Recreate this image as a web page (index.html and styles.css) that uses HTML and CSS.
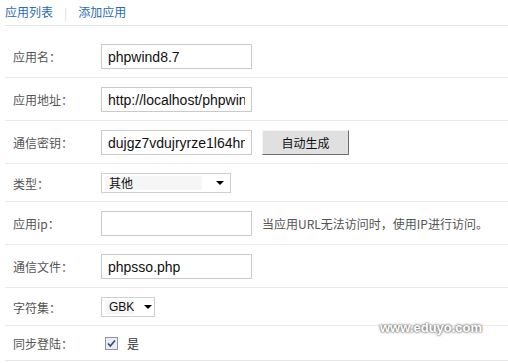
FILE: index.html
```html
<!DOCTYPE html>
<html lang="zh-CN">
<head>
  <meta charset="UTF-8" />
  <title>添加应用</title>
  <link rel="stylesheet" href="styles.css">
</head>
<body>
  <div class="wrap">
    <div class="tabs">
      <a class="tab" href="#">应用列表</a>
      <span class="tab-sep">|</span>
      <a class="tab" href="#">添加应用</a>
    </div>

    <form class="app-form">
      <div class="row">
        <label class="row-label">应用名：</label>
        <div class="row-field"><input class="text" type="text" value="phpwind8.7"></div>
      </div>
      <div class="row">
        <label class="row-label">应用地址：</label>
        <div class="row-field"><input class="text" type="text" value="http://localhost/phpwind"></div>
      </div>
      <div class="row">
        <label class="row-label">通信密钥：</label>
        <div class="row-field">
          <input class="text" type="text" value="dujgz7vdujryrze1l64hmq">
          <button class="btn" type="button">自动生成</button>
        </div>
      </div>
      <div class="row row-select">
        <label class="row-label">类型：</label>
        <div class="row-field">
          <div class="select select-type"><span class="select-value">其他</span><span class="select-arrow"></span></div>
        </div>
      </div>
      <div class="row">
        <label class="row-label">应用ip：</label>
        <div class="row-field">
          <input class="text" type="text" value="">
          <span class="hint">当应用URL无法访问时，使用IP进行访问。</span>
        </div>
      </div>
      <div class="row">
        <label class="row-label">通信文件：</label>
        <div class="row-field"><input class="text" type="text" value="phpsso.php"></div>
      </div>
      <div class="row row-select">
        <label class="row-label">字符集：</label>
        <div class="row-field">
          <div class="select select-charset"><span class="select-value">GBK</span><span class="select-arrow"></span></div>
        </div>
      </div>
      <div class="row row-check">
        <label class="row-label">同步登陆：</label>
        <div class="row-field">
          <span class="check"><svg width="13" height="13" viewBox="0 0 13 13"><rect x="0.5" y="0.5" width="12" height="12" fill="#e9ecf0" stroke="#8d97a3"/><path d="M3 6.5 L5.3 9 L10 3.5" fill="none" stroke="#2b4a8a" stroke-width="1.6"/></svg></span>
          <span class="check-text">是</span>
        </div>
      </div>
    </form>
  </div>
  <div class="watermark">www.eduyo.com</div>
</body>
</html>
```

FILE: styles.css
```css
* {
  box-sizing: border-box;
  margin: 0;
  padding: 0;
}

body {
  font-family: "Noto Sans CJK SC", "Liberation Sans", sans-serif;
  font-size: 12px;
  color: #444;
  background: #fff;
  position: relative;
  height: 363px;
  overflow: hidden;
}

.wrap {
  padding-left: 5px;
}

.tabs {
  height: 26px;
  border-bottom: 1px solid #e6e6e6;
  display: flex;
  align-items: center;
  padding-bottom: 1px;
}

.tab {
  color: #2a6cb0;
  text-decoration: none;
  line-height: 14px;
}

.tab-sep {
  color: #ddd;
  margin: 0 11px 0 11px;
}

.app-form {
  margin-top: 9px;
  border-bottom: 1px solid #dde7ec;
}

.row {
  display: flex;
  align-items: center;
  padding: 9px 0 8px;
  border-bottom: 1px solid #ebebeb;
}

.row:last-child {
  border-bottom: none;
}

.row-label {
  width: 96px;
  padding-left: 8px;
  color: #555;
}

.row-field {
  display: flex;
  align-items: center;
  height: 25px;
}

.row-select .row-field {
  height: 20px;
}

.row-check .row-field {
  height: 16px;
}

.text {
  width: 151px;
  height: 25px;
  border: 1px solid #cacaca;
  padding: 0 6px;
  font-family: "Liberation Sans", sans-serif;
  font-size: 14px;
  color: #111;
  background: #fff;
  outline: none;
}

.btn {
  margin-left: 10px;
  width: 87px;
  height: 25px;
  background: #e0e0e0;
  border: 1px solid;
  border-color: #f4f4f4 #6e6e6e #6e6e6e #f4f4f4;
  font-family: "Noto Sans CJK SC", sans-serif;
  font-size: 12px;
  color: #111;
}

.select {
  display: flex;
  align-items: center;
  height: 20px;
  border: 1px solid #cfcfcf;
  padding: 2px 3px;
  background: #fff;
}

.select-type {
  width: 130px;
}

.select-charset {
  width: 54px;
}

.select-value {
  flex: 1;
  height: 14px;
  line-height: 14px;
  padding-left: 4px;
  background: #f6f6f6;
  color: #111;
  font-size: 12px;
}

.select-type .select-value {
  margin-right: 14px;
}

.select-charset .select-value {
  font-family: "Liberation Sans", sans-serif;
  margin-right: 10px;
}

.select-arrow {
  width: 0;
  height: 0;
  border-left: 4px solid transparent;
  border-right: 4px solid transparent;
  border-top: 4px solid #000;
  margin-right: 3px;
}

.hint {
  margin-left: 10px;
  color: #555;
}

.check {
  display: flex;
  margin-left: 4px;
}

.check-text {
  margin-left: 9px;
  color: #333;
}

.watermark {
  position: absolute;
  left: 380px;
  top: 320px;
  font-family: "Liberation Sans", sans-serif;
  font-size: 13px;
  font-weight: bold;
  color: #fff;
  text-shadow: 0 0 2px #555, 0 0 3px #777;
}
```
